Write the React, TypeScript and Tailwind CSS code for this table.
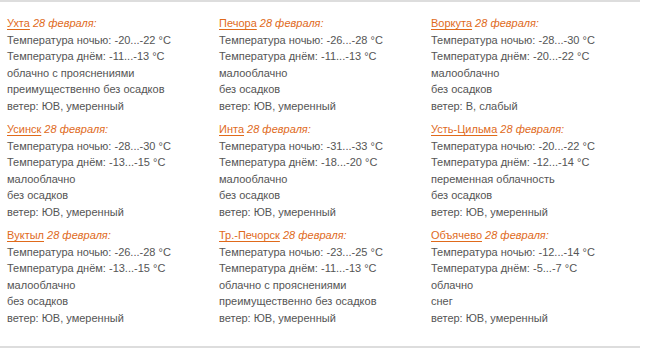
import React from 'react';

interface CityForecast {
  city: string;
  night: string;
  day: string;
  lines: string[];
  wind: string;
}

const forecasts: CityForecast[] = [
  { city: 'Ухта', night: '-20...-22', day: '-11...-13', lines: ['облачно с прояснениями', 'преимущественно без осадков'], wind: 'ЮВ, умеренный' },
  { city: 'Печора', night: '-26...-28', day: '-11...-13', lines: ['малооблачно', 'без осадков'], wind: 'ЮВ, умеренный' },
  { city: 'Воркута', night: '-28...-30', day: '-20...-22', lines: ['малооблачно', 'без осадков'], wind: 'В, слабый' },
  { city: 'Усинск', night: '-28...-30', day: '-13...-15', lines: ['малооблачно', 'без осадков'], wind: 'ЮВ, умеренный' },
  { city: 'Инта', night: '-31...-33', day: '-18...-20', lines: ['малооблачно', 'без осадков'], wind: 'ЮВ, умеренный' },
  { city: 'Усть-Цильма', night: '-20...-22', day: '-12...-14', lines: ['переменная облачность', 'без осадков'], wind: 'ЮВ, умеренный' },
  { city: 'Вуктыл', night: '-26...-28', day: '-13...-15', lines: ['малооблачно', 'без осадков'], wind: 'ЮВ, умеренный' },
  { city: 'Тр.-Печорск', night: '-23...-25', day: '-11...-13', lines: ['облачно с прояснениями', 'преимущественно без осадков'], wind: 'ЮВ, умеренный' },
  { city: 'Объячево', night: '-12...-14', day: '-5...-7', lines: ['облачно', 'снег'], wind: 'ЮВ, умеренный' },
];

const ForecastBlock: React.FC<{ f: CityForecast }> = ({ f }) => (
  <div className="pl-[7px] mb-[7px]">
    <div>
      <a href="#" className="text-[#e06a1b] underline underline-offset-2">{f.city}</a>{' '}
      <i className="text-[#e06a1b]">28 февраля:</i>
    </div>
    <div>Температура ночью: {f.night} °C</div>
    <div>Температура днём: {f.day} °C</div>
    {f.lines.map((l) => (
      <div key={l}>{l}</div>
    ))}
    <div>ветер: {f.wind}</div>
  </div>
);

export default function App() {
  return (
    <div className="w-[669px] h-[358px] bg-white">
      <div
        className="w-[640px] border-t-2 border-b-2 border-[#dddddd] pt-[13px] pb-[13px] text-[11px] leading-[16.5px] text-[#555555]"
        style={{ fontFamily: '"Liberation Sans", Arial, sans-serif' }}
      >
        <div className="grid grid-cols-[212px_212px_212px]">
          {forecasts.map((f) => (
            <ForecastBlock key={f.city} f={f} />
          ))}
        </div>
      </div>
    </div>
  );
}
